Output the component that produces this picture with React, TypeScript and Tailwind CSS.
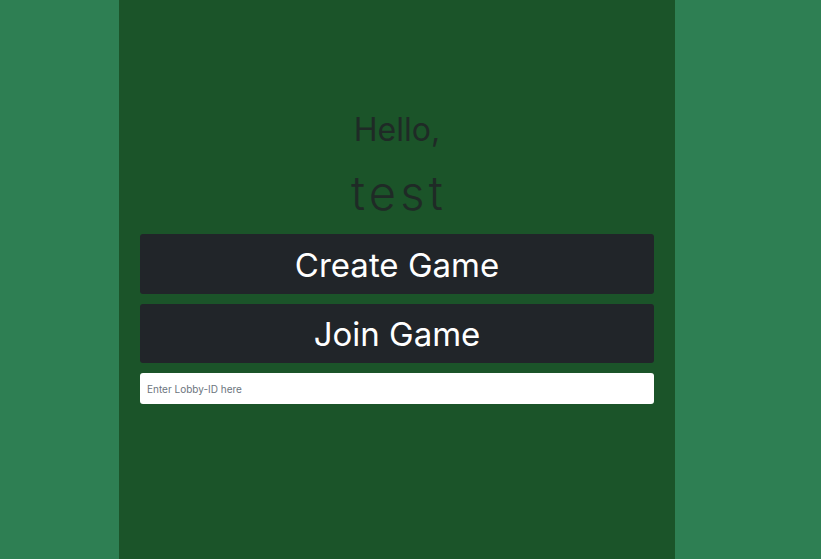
import React, { useState } from 'react';

const App: React.FC = () => {
  const [lobbyId, setLobbyId] = useState('');

  return (
    <div className="flex min-h-[559px] w-full bg-[#2e7f53]" style={{ fontFamily: 'Inter, "Noto Sans", sans-serif' }}>
      <div className="w-[119px] shrink-0" />
      <div className="w-[556px] shrink-0 bg-[#1b5429] px-[21px] pt-[108px]">
        <div className="flex flex-col items-center text-[#1f2a26]">
          <h2 className="text-[32px] leading-[44px] font-normal">Hello,</h2>
          <h1 className="mt-[11px] pl-[4px] text-[47px] leading-[60px] font-light tracking-[0.09em]">test</h1>
        </div>
        <div className="mt-[11px] flex flex-col gap-[10px]">
          <button className="h-[60px] w-full rounded-[3px] bg-[#212529] pt-[3px] text-[33px] text-white">Create Game</button>
          <button className="h-[59px] w-full rounded-[3px] bg-[#212529] pt-[3px] text-[33px] text-white">Join Game</button>
          <input
            type="text"
            value={lobbyId}
            onChange={e => setLobbyId(e.target.value)}
            placeholder="Enter Lobby-ID here"
            className="h-[31px] w-full rounded-[3px] bg-white px-[7px] text-[10px] text-[#212529] outline-none placeholder:text-[#6c757d]"
          />
        </div>
      </div>
      <div className="flex-1" />
    </div>
  );
};

export default App;
